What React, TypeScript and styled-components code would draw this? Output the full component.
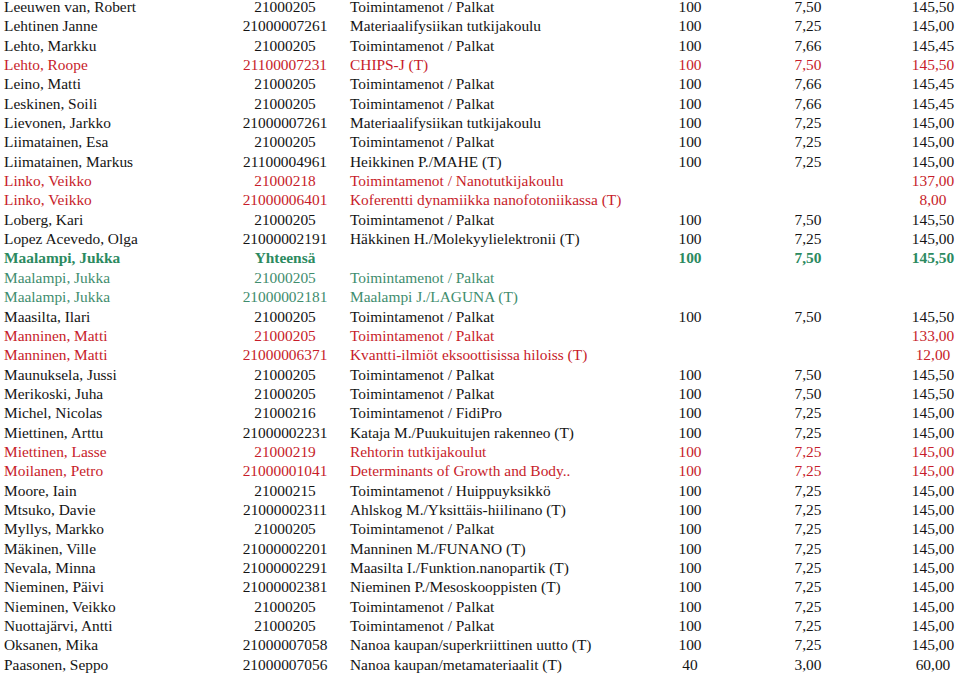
import React from 'react'
import styled, { createGlobalStyle } from 'styled-components'

const GlobalStyle = createGlobalStyle`
  html, body {
    margin: 0;
    padding: 0;
    background: #ffffff;
    overflow: hidden;
  }
`

type Tone = 'normal' | 'red' | 'total' | 'green'

const toneColor: Record<Tone, string> = {
  normal: '#141414',
  red: '#c71c2a',
  total: '#2c8a5f',
  green: '#3f8d6e',
}

const Table = styled.div`
  padding-left: 4px;
  font-family: 'Liberation Serif', 'Times New Roman', serif;
  font-size: 15.4px;
`

const Row = styled.div<{ $tone: Tone }>`
  display: grid;
  grid-template-columns: 236px 90px 310px 100px 136px 84px;
  height: 19.35px;
  line-height: 14px;
  color: ${(p) => toneColor[p.$tone]};
  font-weight: ${(p) => (p.$tone === 'total' ? 700 : 400)};
  white-space: nowrap;
`

const Name = styled.div``

const Code = styled.div`
  text-align: center;
`

const Desc = styled.div`
  padding-left: 20px;
`

const Num = styled.div<{ $shift?: number }>`
  text-align: center;
  padding-left: ${(p) => p.$shift ?? 0}px;
`

type Entry = [string, string, string, string, string, string, Tone?]

const P = 'Toimintamenot / Palkat'

const rows: Entry[] = [
  ['Leeuwen van, Robert', '21000205', P, '100', '7,50', '145,50'],
  ['Lehtinen Janne', '21000007261', 'Materiaalifysiikan tutkijakoulu', '100', '7,25', '145,00'],
  ['Lehto, Markku', '21000205', P, '100', '7,66', '145,45'],
  ['Lehto, Roope', '21100007231', 'CHIPS-J (T)', '100', '7,50', '145,50', 'red'],
  ['Leino, Matti', '21000205', P, '100', '7,66', '145,45'],
  ['Leskinen, Soili', '21000205', P, '100', '7,66', '145,45'],
  ['Lievonen, Jarkko', '21000007261', 'Materiaalifysiikan tutkijakoulu', '100', '7,25', '145,00'],
  ['Liimatainen, Esa', '21000205', P, '100', '7,25', '145,00'],
  ['Liimatainen, Markus', '21100004961', 'Heikkinen P./MAHE (T)', '100', '7,25', '145,00'],
  ['Linko, Veikko', '21000218', 'Toimintamenot / Nanotutkijakoulu', '', '', '137,00', 'red'],
  ['Linko, Veikko', '21000006401', 'Koferentti dynamiikka nanofotoniikassa (T)', '', '', '8,00', 'red'],
  ['Loberg, Kari', '21000205', P, '100', '7,50', '145,50'],
  ['Lopez Acevedo, Olga', '21000002191', 'Häkkinen H./Molekyylielektronii (T)', '100', '7,25', '145,00'],
  ['Maalampi, Jukka', 'Yhteensä', '', '100', '7,50', '145,50', 'total'],
  ['Maalampi, Jukka', '21000205', P, '', '', '', 'green'],
  ['Maalampi, Jukka', '21000002181', 'Maalampi J./LAGUNA (T)', '', '', '', 'green'],
  ['Maasilta, Ilari', '21000205', P, '100', '7,50', '145,50'],
  ['Manninen, Matti', '21000205', P, '', '', '133,00', 'red'],
  ['Manninen, Matti', '21000006371', 'Kvantti-ilmiöt eksoottisissa hiloiss (T)', '', '', '12,00', 'red'],
  ['Maunuksela, Jussi', '21000205', P, '100', '7,50', '145,50'],
  ['Merikoski, Juha', '21000205', P, '100', '7,50', '145,50'],
  ['Michel, Nicolas', '21000216', 'Toimintamenot / FidiPro', '100', '7,25', '145,00'],
  ['Miettinen, Arttu', '21000002231', 'Kataja M./Puukuitujen rakenneo (T)', '100', '7,25', '145,00'],
  ['Miettinen, Lasse', '21000219', 'Rehtorin tutkijakoulut', '100', '7,25', '145,00', 'red'],
  ['Moilanen, Petro', '21000001041', 'Determinants of Growth and Body..', '100', '7,25', '145,00', 'red'],
  ['Moore, Iain', '21000215', 'Toimintamenot / Huippuyksikkö', '100', '7,25', '145,00'],
  ['Mtsuko, Davie', '21000002311', 'Ahlskog M./Yksittäis-hiilinano (T)', '100', '7,25', '145,00'],
  ['Myllys, Markko', '21000205', P, '100', '7,25', '145,00'],
  ['Mäkinen, Ville', '21000002201', 'Manninen M./FUNANO (T)', '100', '7,25', '145,00'],
  ['Nevala, Minna', '21000002291', 'Maasilta I./Funktion.nanopartik (T)', '100', '7,25', '145,00'],
  ['Nieminen, Päivi', '21000002381', 'Nieminen P./Mesoskooppisten (T)', '100', '7,25', '145,00'],
  ['Nieminen, Veikko', '21000205', P, '100', '7,25', '145,00'],
  ['Nuottajärvi, Antti', '21000205', P, '100', '7,25', '145,00'],
  ['Oksanen, Mika', '21000007058', 'Nanoa kaupan/superkriittinen uutto (T)', '100', '7,25', '145,00'],
  ['Paasonen, Seppo', '21000007056', 'Nanoa kaupan/metamateriaalit (T)', '40', '3,00', '60,00'],
]

export default function App() {
  return (
    <>
      <GlobalStyle />
      <Table>
        {rows.map(([name, code, desc, pct, rate, total, tone], i) => (
          <Row key={i} $tone={tone ?? 'normal'}>
            <Name>{name}</Name>
            <Code>{code}</Code>
            <Desc>{desc}</Desc>
            <Num>{pct}</Num>
            <Num>{rate}</Num>
            <Num $shift={30}>{total}</Num>
          </Row>
        ))}
      </Table>
    </>
  )
}
